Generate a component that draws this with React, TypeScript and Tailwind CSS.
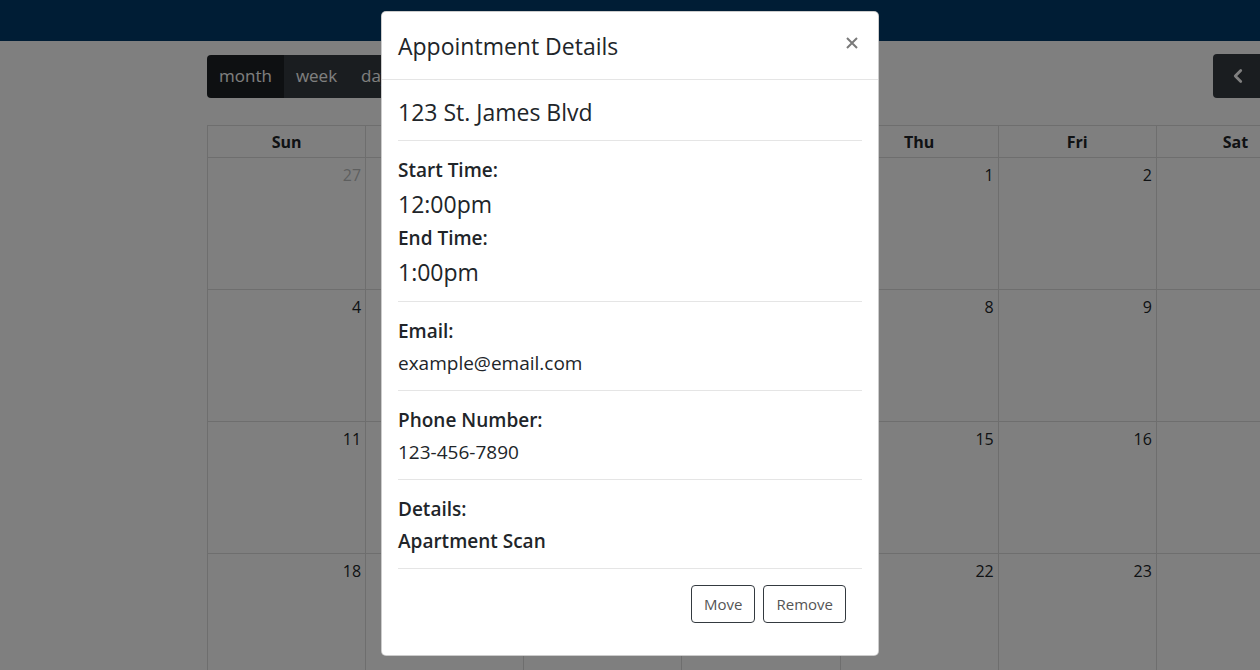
import { ChevronLeft } from "lucide-react";

const weeks = [
  [27, 28, 29, 30, 1, 2, 3],
  [4, 5, 6, 7, 8, 9, 10],
  [11, 12, 13, 14, 15, 16, 17],
  [18, 19, 20, 21, 22, 23, 24],
];
const days = ["Sun", "Mon", "Tue", "Wed", "Thu", "Fri", "Sat"];

const Section = ({ label, value }: { label: string; value: string }) => (
  <div className="pt-[15px] pb-[9px] border-b border-[#e5e5e5]">
    <div className="text-[19px] leading-[28px] font-semibold">{label}</div>
    <div className="text-[19px] leading-[36px]">{value}</div>
  </div>
);

export default function App() {
  return (
    <div
      className="relative w-[1260px] h-[670px] overflow-hidden bg-white text-[#212529]"
      style={{ fontFamily: "'Open Sans', 'Noto Sans', sans-serif" }}
    >
      <nav className="h-[41px] bg-[#003b6b]" />

      <div className="ml-[207px] w-[1108px]">
        <div className="flex items-center justify-between mt-[13px]">
          <div className="flex h-[43px] rounded-[4px] overflow-hidden text-[17px] text-white">
            <button className="px-[12px] bg-[#1d2124]">month</button>
            <button className="px-[12px] bg-[#343a40]">week</button>
            <button className="px-[12px] bg-[#343a40]">day</button>
          </div>
          <div className="flex h-[44px] rounded-[4px] overflow-hidden text-white">
            <button className="w-[51px] flex items-center justify-center bg-[#343a40] border-r border-[#23272b]">
              <ChevronLeft size={22} strokeWidth={3} />
            </button>
            <button className="w-[51px] bg-[#343a40]" />
          </div>
        </div>

        <div className="mt-[27px] border-l border-t border-[#dddddd]">
          <div className="grid grid-cols-7 h-[32px]">
            {days.map((d) => (
              <div key={d} className="border-r border-b border-[#dddddd] flex items-center justify-center font-bold text-[16px]">
                {d}
              </div>
            ))}
          </div>
          {weeks.map((w, i) => (
            <div key={i} className="grid grid-cols-7 h-[132px]">
              {w.map((n, j) => (
                <div key={j} className="border-r border-b border-[#dddddd] text-right pr-[4px] pt-[5px] text-[16px]">
                  <span className={i === 0 && n > 20 ? "opacity-30" : ""}>{n}</span>
                </div>
              ))}
            </div>
          ))}
        </div>
      </div>

      <div className="absolute inset-0 bg-black/50" />

      <div className="absolute inset-0 flex justify-center pt-[11px]">
        <div className="w-[498px] h-[645px] bg-white rounded-[5px] border border-black/20 flex flex-col">
          <div className="h-[68px] px-[16px] flex items-center justify-between border-b border-[#e5e5e5]">
            <h4 className="text-[23px] leading-[36px]">Appointment Details</h4>
            <button className="w-[16px] h-[16px] flex items-center justify-center mr-[2px] mb-[6px]">
              <svg width="12" height="12" viewBox="0 0 12 12">
                <path d="M1 1L11 11M11 1L1 11" stroke="#7a7a7a" strokeWidth="2" />
              </svg>
            </button>
          </div>
          <div className="px-[16px]">
            <div className="pt-[16px] pb-[12px] border-b border-[#e5e5e5]">
              <div className="text-[23px] leading-[32px]">123 St. James Blvd</div>
            </div>
            <div className="pt-[15px] pb-[9px] border-b border-[#e5e5e5]">
              <div className="text-[19px] leading-[28px] font-semibold">Start Time:</div>
              <div className="text-[23px] leading-[40px]">12:00pm</div>
              <div className="text-[19px] leading-[28px] font-semibold">End Time:</div>
              <div className="text-[23px] leading-[40px]">1:00pm</div>
            </div>
            <Section label="Email:" value="example@email.com" />
            <Section label="Phone Number:" value="123-456-7890" />
            <div className="pt-[15px] pb-[9px] border-b border-[#e5e5e5]">
              <div className="text-[19px] leading-[28px] font-semibold">Details:</div>
              <div className="text-[19px] leading-[36px] font-semibold">Apartment Scan</div>
            </div>
            <div className="flex justify-end gap-[8px] pt-[16px] pr-[16px]">
              <button className="h-[38px] px-[12px] border border-[#343a40] rounded-[4px] text-[15px] text-[#555]">
                Move
              </button>
              <button className="h-[38px] px-[12px] border border-[#343a40] rounded-[4px] text-[15px] text-[#555]">
                Remove
              </button>
            </div>
          </div>
        </div>
      </div>
    </div>
  );
}
